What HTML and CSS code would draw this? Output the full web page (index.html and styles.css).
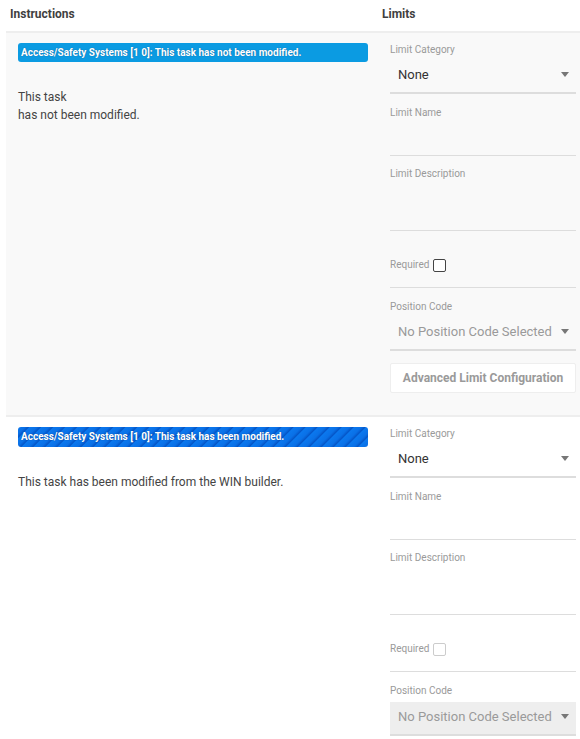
FILE: index.html
```html
<!DOCTYPE html>
<html lang="en">
<head>
<meta charset="utf-8">
<title>Instructions and Limits</title>
<link rel="stylesheet" href="styles.css">
</head>
<body>
<div class="page">
  <div class="header">
    <div class="header-cell">Instructions</div>
    <div class="header-cell">Limits</div>
  </div>

  <div class="task task-alt">
    <div class="instructions">
      <div class="badge">Access/Safety Systems [1 0]: This task has not been modified.</div>
      <div class="instr-text">This task<br>has not been modified.</div>
    </div>
    <div class="limits">
      <div class="field">
        <div class="label">Limit Category</div>
        <div class="select"><span class="value">None</span><span class="caret"></span></div>
      </div>
      <div class="field field-line">
        <div class="label">Limit Name</div>
        <div class="input"></div>
      </div>
      <div class="field field-line">
        <div class="label">Limit Description</div>
        <div class="textarea"></div>
      </div>
      <div class="field field-line field-check">
        <div class="check-row"><span class="label">Required</span><span class="checkbox"></span></div>
      </div>
      <div class="field">
        <div class="label">Position Code</div>
        <div class="select"><span class="value placeholder">No Position Code Selected</span><span class="caret"></span></div>
      </div>
      <button class="adv-btn" type="button">Advanced Limit Configuration</button>
    </div>
  </div>

  <div class="task">
    <div class="instructions">
      <div class="badge badge-modified">Access/Safety Systems [1 0]: This task has been modified.</div>
      <div class="instr-text">This task has been modified from the WIN builder.</div>
    </div>
    <div class="limits">
      <div class="field">
        <div class="label">Limit Category</div>
        <div class="select"><span class="value">None</span><span class="caret"></span></div>
      </div>
      <div class="field field-line">
        <div class="label">Limit Name</div>
        <div class="input"></div>
      </div>
      <div class="field field-line">
        <div class="label">Limit Description</div>
        <div class="textarea"></div>
      </div>
      <div class="field field-line field-check">
        <div class="check-row"><span class="label">Required</span><span class="checkbox checkbox-disabled"></span></div>
      </div>
      <div class="field">
        <div class="label">Position Code</div>
        <div class="select select-disabled"><span class="value placeholder">No Position Code Selected</span><span class="caret"></span></div>
      </div>
    </div>
  </div>
</div>
</body>
</html>
```

FILE: styles.css
```css
* { box-sizing: border-box; }

html, body {
  margin: 0;
  padding: 0;
  background: #ffffff;
}

body {
  font-family: Roboto, "Liberation Sans", Arial, sans-serif;
  color: #444444;
  width: 580px;
  overflow: hidden;
}

.header {
  display: grid;
  grid-template-columns: 372px 1fr;
  margin-left: 6px;
  height: 31px;
  align-items: center;
}

.header-cell {
  padding-left: 4px;
  font-size: 12px;
  font-weight: 700;
  color: #3f3f3f;
  padding-bottom: 3px;
}

.task {
  display: grid;
  grid-template-columns: 372px 1fr;
  margin-left: 6px;
  border-top: 2px solid #eeeeee;
  background: #ffffff;
}

.task-alt {
  background: #f9f9f9;
}

.instructions {
  padding: 10px 10px 0 12px;
}

.badge {
  height: 19px;
  border-radius: 3px;
  background: #0b9be2;
  color: #ffffff;
  font-size: 10px;
  font-weight: 700;
  line-height: 19px;
  padding-left: 3px;
  white-space: nowrap;
  overflow: hidden;
  text-shadow: 0 0 1px rgba(0, 40, 90, 0.6);
}

.badge-modified {
  height: 20px;
  line-height: 20px;
  background: repeating-linear-gradient(135deg,
    #0b78ee 0px, #0a70e6 5px, #0456c8 7.5px, #0b78ee 8.5px);
}

.instr-text {
  margin-top: 26px;
  font-size: 12px;
  line-height: 18px;
  color: #444444;
}

.limits {
  padding: 11px 4px 22px 12px;
  display: flex;
  flex-direction: column;
}

.field {
  display: flex;
  flex-direction: column;
}

.field-line {
  border-bottom: 1px solid #dddddd;
}

.field + .field {
  margin-top: 13px;
}

.field-line + .field-line {
  margin-top: 12px;
}

.label {
  font-size: 10px;
  line-height: 12px;
  color: #9a9a9a;
}

.select {
  margin-top: 4px;
  height: 34px;
  padding: 0 7px 4px 8px;
  border-bottom: 2px solid #dddddd;
  display: flex;
  align-items: center;
  justify-content: space-between;
}

.select-disabled {
  background: #eeeeee;
  margin-top: 5px;
}

.value {
  font-size: 13px;
  color: #333333;
}

.placeholder {
  color: #9a9a9a;
}

.caret {
  width: 0;
  height: 0;
  border-left: 4.5px solid transparent;
  border-right: 4.5px solid transparent;
  border-top: 5px solid #777777;
  margin-top: 1px;
}

.input {
  height: 36px;
}

.textarea {
  height: 50px;
}

.field-check {
  padding-top: 15px;
  padding-bottom: 15px;
}

.check-row {
  display: flex;
  align-items: center;
  gap: 4px;
  height: 14px;
}

.checkbox {
  width: 13px;
  height: 13px;
  border: 1px solid #444444;
  border-radius: 2px;
  background: #ffffff;
}

.checkbox-disabled {
  border-color: #cccccc;
}

.adv-btn {
  margin-top: 12px;
  height: 30px;
  width: 100%;
  background: #ffffff;
  border: 1px solid #eeeeee;
  border-radius: 2px;
  font-family: Roboto, "Liberation Sans", Arial, sans-serif;
  font-size: 12px;
  font-weight: 700;
  color: #9a9a9a;
  padding: 0;
}
```
